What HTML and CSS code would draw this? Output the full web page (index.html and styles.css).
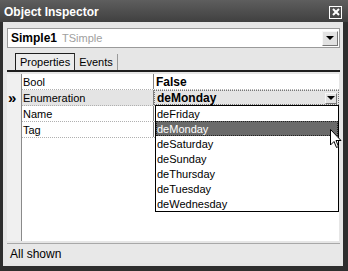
FILE: index.html
```html
<!DOCTYPE html>
<html lang="en">

<head>
  <meta charset="UTF-8" />
  <title>Object Inspector</title>
  <link rel="stylesheet" href="styles.css">
</head>

<body>
  <div class="window">
    <div class="titlebar">
      <span class="title">Object Inspector</span>
      <span class="close">
        <svg width="10" height="10" viewBox="0 0 10 10">
          <path d="M2 2 L8 8 M8 2 L2 8" stroke="#fff" stroke-width="2" />
        </svg>
      </span>
    </div>

    <div class="body">
      <div class="combo">
        <span class="obj-name">Simple1</span>
        <span class="obj-type">TSimple</span>
        <span class="drop-btn"><span class="arrow"></span></span>
      </div>

      <div class="tabs">
        <span class="tab active">Properties</span>
        <span class="tab">Events</span>
      </div>

      <div class="grid">
        <div class="gutter">
          <div class="gcell"></div>
          <div class="gcell marker">&raquo;</div>
          <div class="gcell"></div>
          <div class="gcell"></div>
        </div>
        <div class="rows">
          <div class="row">
            <div class="name">Bool</div>
            <div class="value">False</div>
          </div>
          <div class="row selected">
            <div class="name">Enumeration</div>
            <div class="value focus">deMonday<span class="drop-btn small"><span class="arrow"></span></span></div>
          </div>
          <div class="row">
            <div class="name">Name</div>
            <div class="value"></div>
          </div>
          <div class="row">
            <div class="name">Tag</div>
            <div class="value"></div>
          </div>
        </div>

        <!-- open enumeration list -->
        <ul class="list">
          <li>deFriday</li>
          <li class="hot">deMonday</li>
          <li>deSaturday</li>
          <li>deSunday</li>
          <li>deThursday</li>
          <li>deTuesday</li>
          <li>deWednesday</li>
        </ul>

        <svg class="cursor" width="12" height="20" viewBox="0 0 12 20">
          <path d="M0.5 0.5 L0.5 16 L4 12.5 L6.5 18.5 L8.5 17.5 L6 11.5 L11 11.5 Z" fill="#fff" stroke="#000" stroke-width="1" />
        </svg>
      </div>

      <div class="status">All shown</div>
    </div>
  </div>
</body>

</html>
```

FILE: styles.css
```css
* {
  box-sizing: border-box;
  margin: 0;
  padding: 0;
}

body {
  font-family: 'Liberation Sans', Arial, sans-serif;
  font-size: 11px;
  color: #000;
  background: #2e2e2e;
}

.window {
  width: 348px;
  height: 271px;
  display: flex;
  flex-direction: column;
  background: #2e2e2e;
}

.titlebar {
  height: 22px;
  flex-shrink: 0;
  display: flex;
  align-items: center;
  justify-content: space-between;
  padding: 0 6px 0 4px;
  background: linear-gradient(#5e5e5e, #404040);
}

.title {
  color: #fff;
  font-weight: 700;
  font-size: 12px;
  padding-top: 2px;
}

.close {
  width: 13px;
  height: 13px;
  border: 1px solid #fff;
  display: flex;
  align-items: center;
  justify-content: center;
  margin-top: 2px;
}

.body {
  flex: 1;
  margin: 0 5px 5px 3px;
  background: #e6e6e6;
  padding: 6px 3px 3px 4px;
  display: flex;
  flex-direction: column;
}

.combo {
  height: 20px;
  background: #fff;
  border: 1px solid #9a9a9a;
  display: flex;
  align-items: center;
  padding: 0 1px 0 3px;
  gap: 5px;
  font-size: 12px;
}

.obj-name {
  font-weight: 700;
}

.obj-type {
  color: #a0a0a0;
  font-size: 11px;
}

.drop-btn {
  margin-left: auto;
  width: 16px;
  height: 15px;
  background: #e2e2e2;
  border: 1px solid #f8f8f8;
  border-right-color: #777;
  border-bottom-color: #777;
  display: flex;
  align-items: center;
  justify-content: center;
}

.arrow {
  width: 0;
  height: 0;
  border-left: 4px solid transparent;
  border-right: 4px solid transparent;
  border-top: 4px solid #000;
}

.drop-btn.small {
  width: 12px;
  height: 11px;
}

.tabs {
  margin-top: 6px;
  height: 18px;
  display: flex;
  align-items: flex-end;
  padding-left: 8px;
  border-bottom: 2px solid #1e1e1e;
}

.tab {
  padding: 1px 4px 0 4px;
  height: 16px;
  line-height: 15px;
  border-right: 1px solid #999;
}

.tab.active {
  background: #ececec;
  border: 1px solid #fff;
  border-left-color: #1e1e1e;
  border-top-color: #1e1e1e;
  border-right-color: #333;
  border-bottom: none;
  height: 17px;
}

.grid {
  flex: 1;
  margin-top: 2px;
  margin-right: 1px;
  display: flex;
  background: #fff;
  position: relative;
}

.gutter {
  width: 15px;
  background: #f0f0f0;
  border-right: 1px solid #8a8a8a;
}

.gcell {
  height: 16px;
}

.marker {
  font-weight: 700;
  font-size: 15px;
  line-height: 16px;
  padding-left: 1px;
}

.rows {
  flex: 1;
}

.row {
  height: 16px;
  display: flex;
  border-bottom: 1px dotted #b0b0b0;
}

.row.selected {
  background: #e4e4e4;
}

.name {
  width: 132px;
  padding: 2px 0 0 1px;
  border-right: 1px solid #808080;
}

.value {
  flex: 1;
  display: flex;
  align-items: center;
  padding: 1px 1px 0 2px;
  font-weight: 700;
  font-size: 12px;
}

.value.focus {
  border: 1px dotted #777;
}

.list {
  list-style: none;
  position: absolute;
  left: 148px;
  top: 31px;
  width: 184px;
  background: #fff;
  border: 1px solid #000;
}

.list li {
  height: 15px;
  line-height: 16px;
  padding-left: 1px;
}

.list .hot {
  background: #6a6a6a;
  color: #fff;
  outline: 1px dotted #222;
  outline-offset: -1px;
}

.cursor {
  position: absolute;
  left: 323px;
  top: 55px;
}

.status {
  height: 20px;
  margin-top: 2px;
  border-top: 1px solid #a8a8a8;
  background: #e8e8e8;
  padding: 3px 3px 0;
  font-size: 12px;
}
```
